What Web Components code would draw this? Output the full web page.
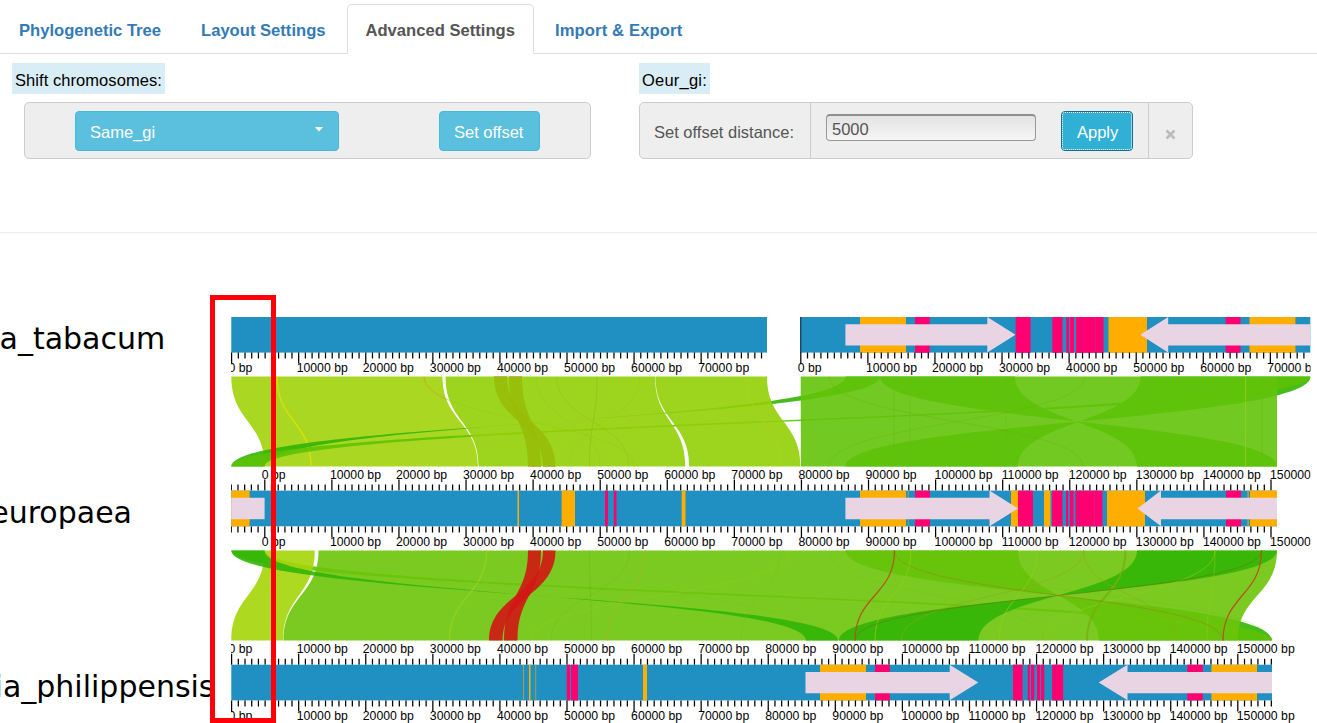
<!DOCTYPE html>
<html lang="en">
<head>
<meta charset="utf-8">
<title>Synteny viewer</title>
<style>
html,body{margin:0;height:100%;background:#fff;overflow:hidden}
body{font-family:"Liberation Sans",Arial,sans-serif;font-size:16.5px;color:#000}
</style>
</head>
<body>
<synteny-app></synteny-app>
<script>
const define=(name,html)=>customElements.define(name,class extends HTMLElement{
  constructor(){super();const t=document.createElement('template');t.innerHTML=html;
    this.attachShadow({mode:'open'}).append(t.content.cloneNode(true));}
});

define('nav-tab',`<style>
:host{display:block;box-sizing:border-box;height:50px;padding:0 18px;margin-right:2px;border:1px solid transparent;border-radius:5px 5px 0 0;line-height:51px;font-size:16.6px;font-weight:bold;color:#337ab7;white-space:nowrap}
:host([active]){color:#555;background:#fff;border-color:#ddd #ddd #fff}
</style><slot></slot>`);

define('nav-tabs',`<style>
:host{display:flex;box-sizing:border-box;height:54px;padding-top:4px;border-bottom:1px solid #ddd}
</style><slot></slot>`);

define('tool-group',`<style>
:host{display:flex;flex-direction:column;align-items:flex-start}
.cap{box-sizing:border-box;height:31px;padding:0 3px;line-height:34px;background:#d9edf7;white-space:nowrap;letter-spacing:var(--track,0)}
.box{box-sizing:border-box;height:57px;width:var(--w);margin:8px 0 0 var(--indent,0px);display:flex;background:#eee;border:1px solid #ccc;border-radius:5px;color:#555}
</style><div class="cap"><slot name="caption"></slot></div><div class="box"><slot></slot></div>`);

define('tool-cell',`<style>
:host{display:flex;box-sizing:border-box;height:55px;padding:0 14px;line-height:59px;border-right:1px solid #ccc;white-space:nowrap}
:host([last]){border-right:0}
</style><slot></slot>`);

define('tool-button',`<style>
:host{display:flex;align-items:center;justify-content:space-between;box-sizing:border-box;height:40px;margin-top:8px;padding:1px 14px 0;line-height:24px;border:1px solid #46b8da;border-radius:4px;background:#5bc0de;color:#fff;white-space:nowrap}
:host([pressed]){background:#31b0d5;border-color:#1b6d85;outline:1px dotted #fff;outline-offset:-2px}
</style><slot></slot>`);

define('caret-icon',`<style>:host{display:block;width:8px;height:5px;margin:-4px 1px 0 0}svg{display:block}</style>
<svg width="8" height="5" viewBox="0 0 8 5"><path d="M0 0H8L4 4.4Z" fill="#fff"/></svg>`);

define('offset-input',`<style>
:host{display:block}
input{display:block;box-sizing:border-box;width:210px;height:27px;margin-top:11px;padding:2px 5px 0;border:2px solid #999;border-width:2px 1px 1px;border-color:#8f8f8f #999 #999;border-radius:4px;background:linear-gradient(#e3e3e3,#f5f5f5);font:inherit;color:#555}
</style><input value="5000">`);

define('close-icon',`<style>:host{display:block;margin:26px auto 0}svg{display:block}</style>
<svg width="11" height="11" viewBox="0 0 11 11"><path d="M1.5 1.5 9.5 9.5M9.5 1.5 1.5 9.5" stroke="#bcbcbc" stroke-width="2.6"/></svg>`);

const UNIT=67.08, L=231.3, R=1310.5;
const BLUE='#1f90c1', Y='#ffae00', P='#ff0071';
const rect=(x1,x2,y,h,f)=>`<rect x="${x1}" y="${y}" width="${(x2-x1).toFixed(2)}" height="${h}" fill="${f}"/>`;

function scale(zero,from,to,y,up){
  let d='',txt='';
  for(let k=Math.ceil((from-zero)/UNIT*10-.3);zero+k*UNIT/10<=to;k++){
    const x=(zero+k*UNIT/10).toFixed(2), major=k%10===0&&k>=0;
    d+=`M${x} ${y}v${(up?-1:1)*(major?11:6)}`;
    const shift=k>=100?-1:k===10?-2:-3;
    if(major) txt+=`<text x="${(+x+shift).toFixed(2)}" y="${up?y-11.5:y+19.5}">${k*1000} bp</text>`;
  }
  return `<path d="${d}" stroke="#000" stroke-width="1.25"/>${txt}`;
}
function arrow(tail,neck,tip,y){
  return `<path d="M${tail} ${y+7.2}H${neck}V${y}L${tip} ${y+17.8}L${neck} ${y+35.6}V${y+28.6}H${tail}Z" fill="#e8d4e3"/>`;
}
function features(y,list){return list.map(([c,a,b])=>rect(a,b,y,35.8,c)).join('');}
function ribbon(y,a1,a2,b1,b2,c){
  const m=y+45,e=y+90;
  return `<path d="M${a1} ${y}C${a1} ${m} ${b1} ${m} ${b1} ${e}L${b2} ${e}C${b2} ${m} ${a2} ${m} ${a2} ${y}Z" fill="${c}" fill-opacity=".9"/>`;
}
function thread(y,a,b,c,w=1,o=1){
  const m=y+45;
  return `<path d="M${a} ${y}C${a} ${m} ${b} ${m} ${b} ${y+90}" fill="none" stroke="${c}" stroke-width="${w}" opacity="${o}"/>`;
}
const dark='rgb(50,181,5)', mid='rgb(92,194,3)', red='rgb(210,22,20)';

function upperLinks(){
  const y=376.5, r=(...a)=>ribbon(y,...a), t=(...a)=>thread(y,...a);
  return r(231.3,442.5,264.6,478,'rgb(161,211,9)')
  +t(277,311,'#d5e00c',1.5)
  +r(1140.5,1310.5,1018,845.5,dark)+r(1015,880,1137,1277,dark)
  +r(880,845.5,231.3,264.6,dark)+r(1277,1310.5,231.3,264.6,mid)
  +t(424,634,'#dc8a20',1,.5)
  +r(494,507,543,555.5,red)+r(509,522,528,541,red)
  +r(445.5,655,478.6,685.3,'rgb(145,207,5)')
  +r(655.4,767,689.3,800.5,'rgb(145,207,5)')
  +r(800.7,1277,801,1277,'rgb(98,195,9)')
  +t(536,600,'#7fb51c',1,.15)+t(556.5,629,'#7fb51c',1,.25)+t(597,589.5,'#7fb51c',1,.4)
  +t(640,569,'#7fb51c',1,.12)+t(746.5,781,'#bfd61c',1,.5)
  +t(829,1083,'#7c9f15',1,.28)+t(1085,829,'#7c9f15',1,.22)
  +t(1245.5,1245.5,'#9bd01c',1,.7)+t(1262,1262,'#65b812',1,.4)
  +t(894,894,'#65b812',1,.4)+t(910,910,'#65b812',1,.25)+t(1006,1006,'#65b812',1,.25);
}
function lowerLinks(){
  const y=550.5, r=(...a)=>ribbon(y,...a), t=(...a)=>thread(y,...a);
  return r(845.5,1018,1272,1099,dark)+r(231.3,264.6,1239,1272,mid)
  +r(264.6,314.8,231.3,283,'rgb(165,213,9)')
  +r(318.5,1277,283.5,1237.7,'rgb(108,196,9)')
  +r(1137,1277,978.5,839,dark)+r(231.3,264.6,838,806,dark)
  +r(528,541,504,517.5,red)+r(543,555.5,489,502.5,red)
  +t(486.5,449.5,'#a6d41e',1.1,.75)+t(645.3,607.3,'#b8ad1d',1.1,.55)
  +t(589.5,591.5,'#6ab51a',1,.4)+t(629.5,551,'#6ab51a',1,.3)+t(829,1044,'#6ab51a',1,.15)
  +t(790,531,'#9bd41b',1,.3)+t(780,741,'#6ab51a',1,.15)+t(569,820,'#6ab51a',1,.12)
  +t(911,875,'#91ce15',1,.7)+t(1037,999,'#94cf16',1,.7)+t(941,1270,'#76b914',1,.2)
  +t(1215,1045,'#94c916',1,.6)+t(1215,1207,'#94c916',1,.5)
  +t(1083.5,901,'#a39c17',1,.5)+t(1083.5,1176.5,'#a39c17',1,.55)
  +t(1125.5,1087,'#78ae12',2,.8)
  +t(894.5,1223,'#92851a',1,.55)+t(1261.5,855,'#795c11',1,.42)
  +t(894.5,855,'#b6521b',1.2)+t(1261.5,1223,'#b6521b',1.2);
}
function chart(){
  const a=317,b=490.6,c=664.7;
  return rect(231.3,767,a,35.6,BLUE)+rect(800.5,R,a,35.6,BLUE)
  +features(a,[[Y,860,906],[P,915,929.7],[P,1015.7,1030.6],[P,1052.3,1062.5],[P,1066.3,1069],[P,1070,1074],[P,1076,1103.5],['#b51a84',1079.7,1080.4],['#c42c87',1095,1095.7],[Y,1108.5,1147],[P,1225.7,1240.5],[Y,1249.5,1295.4]])
  +`<path d="M800.7 ${a}v36" stroke="#12384d" stroke-width="1.2"/>`
  +arrow(845.4,987.3,1015.5,a)+arrow(1310,1168.2,1140.3,a)
  +scale(231.6,L,767,352.6)+scale(800.8,800,R,352.6)
  +upperLinks()
  +scale(264.8,L,1277,b,true)+rect(231.3,1277,b,35.7,BLUE)
  +features(b,[[Y,231.3,249.6],[Y,517.5,519],[Y,561.6,575],[P,605,608],[P,613.8,616.5],[Y,681.7,685.5],[Y,860,906],['#8ea05d',907.6,908.8],[P,915,930],[Y,1011,1018],[P,1018,1033],[Y,1044,1050.5],[P,1052,1062.5],[P,1066,1068.2],[P,1069.8,1073.5],[P,1075.4,1102.4],['#b51a84',1079,1079.7],['#c42c87',1094,1094.7],[Y,1107,1145],[P,1226,1241],['#a8a040',1247.3,1249],[Y,1250,1277]])
  +rect(231.3,264.6,b+7.2,21.4,'#e8d4e3')+arrow(845.4,989.5,1018,b)+arrow(1277,1161,1137.5,b)
  +scale(264.8,L,1277,526.4)
  +lowerLinks()
  +scale(231.6,L,1272,c,true)+rect(231.3,1272,c,35.7,BLUE)
  +features(c,[['#a8a040',523,524],[Y,529,530.5],['#a8a040',535.2,536.2],[P,566.8,570],[P,571,578],[Y,643,647],[Y,820,866],[P,875,889.8],[P,1013,1022.6],[P,1027.7,1029.8],[P,1031,1034.3],[P,1037,1040],[P,1040.8,1044.3],[P,1052,1063.2],['#b51a84',1055,1055.7],[P,1187.3,1202.8],[Y,1211.4,1257]])
  +arrow(805.5,949.7,978.3,c)+arrow(1272,1127.5,1098.7,c)
  +scale(231.6,L,1272,700.5);
}

customElements.define('synteny-chart',class extends HTMLElement{
  constructor(){super();this.attachShadow({mode:'open'}).innerHTML=`<style>
:host{display:block;position:relative;height:490px}
svg{display:block}
.tracks{font:12.25px "Liberation Sans",Arial,sans-serif}
.names{font:30px "DejaVu Sans",sans-serif}
.focus{position:absolute;left:210px;top:62px;width:56px;height:418px;border:5px solid #ff000a}
</style><svg width="1317" height="490" viewBox="0 233 1317 490">
<defs><clipPath id="view"><rect x="231" y="300" width="1079.6" height="423"/></clipPath></defs>
<g class="names" text-anchor="end"><text x="165.2" y="349">a_tabacum</text><text x="132" y="523">europaea</text><text x="214.5" y="697">ia_philippensis</text></g>
<g class="tracks" clip-path="url(#view)">${chart()}</g></svg><div class="focus"></div>`;}
});

define('synteny-app',`<style>
:host{display:block;height:723px;overflow:hidden}
.last{letter-spacing:.14px}
.tools{display:grid;grid-template-columns:627px 1fr;box-sizing:border-box;height:179px;padding:9px 12px 0;border-bottom:1px solid #eee}
.shift{--w:567px;--indent:12px;--track:.06px}
.offset{--w:554px;--track:.22px}
.pick{width:264px;margin-left:50px}
.set{width:101px;margin-left:100px}
.label{width:171px}
.entry{width:338px;padding-left:15px}
.apply{width:72px;margin-left:25px;padding-left:15px}
.close{flex:1;padding:0}
</style>
<nav-tabs><nav-tab>Phylogenetic Tree</nav-tab><nav-tab>Layout Settings</nav-tab><nav-tab active>Advanced Settings</nav-tab><nav-tab class="last">Import &amp; Export</nav-tab></nav-tabs>
<div class="tools">
<tool-group class="shift"><span slot="caption">Shift chromosomes:</span>
<tool-button class="pick">Same_gi<caret-icon></caret-icon></tool-button><tool-button class="set">Set offset</tool-button></tool-group>
<tool-group class="offset"><span slot="caption">Oeur_gi:</span>
<tool-cell class="label">Set offset distance:</tool-cell><tool-cell class="entry"><offset-input></offset-input><tool-button class="apply" pressed>Apply</tool-button></tool-cell><tool-cell class="close" last><close-icon></close-icon></tool-cell></tool-group>
</div>
<synteny-chart></synteny-chart>`);
</script>
</body>
</html>
